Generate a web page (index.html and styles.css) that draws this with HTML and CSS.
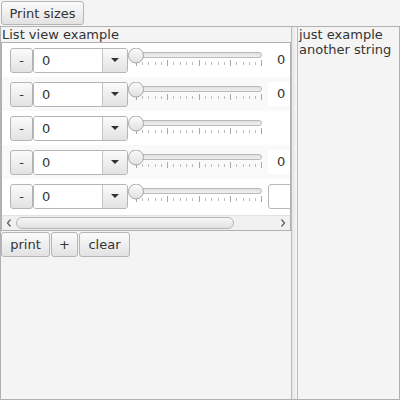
FILE: index.html
```html
<!DOCTYPE html>
<html>
<head>
<meta charset="utf-8">
<link rel="stylesheet" href="styles.css">
</head>
<body>
<svg class="defs" width="0" height="0">
  <defs>
    <linearGradient id="thumbg" x1="0" y1="0" x2="0" y2="1">
      <stop offset="0" stop-color="#fcfcfc"/>
      <stop offset="1" stop-color="#e0e0e0"/>
    </linearGradient>
    <linearGradient id="trackg" x1="0" y1="0" x2="0" y2="1">
      <stop offset="0" stop-color="#dedede"/>
      <stop offset="1" stop-color="#f2f2f2"/>
    </linearGradient>
  </defs>
</svg>
<div class="toolbar"><button class="btn top-btn">Print sizes</button></div>
<div class="split">
  <div class="left">
    <div class="title">List view example</div>
    <div class="list">
      <div class="rows">
        <div class="row">
          <button class="btn minus">-</button>
          <div class="combo"><span class="combo-text">0</span><span class="combo-arrow"><svg width="8" height="4"><path d="M0 0h8l-4 4z" fill="#333"/></svg></span></div>
          <svg class="slider" width="140" height="25"><rect x="7.5" y="4.5" width="126" height="5" rx="2.5" fill="url(#trackg)" stroke="#b9b9b9"/><path d="M8.5 12v6M39.5 12v6M71.5 12v6M102.5 12v6M133.5 12v6" stroke="#a8a8a8"/><path d="M14.5 14v3M20.5 14v3M27.5 14v3M33.5 14v3M45.5 14v3M52.5 14v3M58.5 14v3M64.5 14v3M77.5 14v3M83.5 14v3M90.5 14v3M96.5 14v3M108.5 14v3M115.5 14v3M121.5 14v3M127.5 14v3" stroke="#bdbdbd"/><circle cx="8" cy="7.5" r="7.5" fill="url(#thumbg)" stroke="#a6a6a6"/></svg>
          <span class="value">0</span>
        </div>
        <div class="row alt">
          <button class="btn minus">-</button>
          <div class="combo"><span class="combo-text">0</span><span class="combo-arrow"><svg width="8" height="4"><path d="M0 0h8l-4 4z" fill="#333"/></svg></span></div>
          <svg class="slider" width="140" height="25"><rect x="7.5" y="4.5" width="126" height="5" rx="2.5" fill="url(#trackg)" stroke="#b9b9b9"/><path d="M8.5 12v6M39.5 12v6M71.5 12v6M102.5 12v6M133.5 12v6" stroke="#a8a8a8"/><path d="M14.5 14v3M20.5 14v3M27.5 14v3M33.5 14v3M45.5 14v3M52.5 14v3M58.5 14v3M64.5 14v3M77.5 14v3M83.5 14v3M90.5 14v3M96.5 14v3M108.5 14v3M115.5 14v3M121.5 14v3M127.5 14v3" stroke="#bdbdbd"/><circle cx="8" cy="7.5" r="7.5" fill="url(#thumbg)" stroke="#a6a6a6"/></svg>
          <span class="value">0</span>
        </div>
        <div class="row">
          <button class="btn minus">-</button>
          <div class="combo"><span class="combo-text">0</span><span class="combo-arrow"><svg width="8" height="4"><path d="M0 0h8l-4 4z" fill="#333"/></svg></span></div>
          <svg class="slider" width="140" height="25"><rect x="7.5" y="4.5" width="126" height="5" rx="2.5" fill="url(#trackg)" stroke="#b9b9b9"/><path d="M8.5 12v6M39.5 12v6M71.5 12v6M102.5 12v6M133.5 12v6" stroke="#a8a8a8"/><path d="M14.5 14v3M20.5 14v3M27.5 14v3M33.5 14v3M45.5 14v3M52.5 14v3M58.5 14v3M64.5 14v3M77.5 14v3M83.5 14v3M90.5 14v3M96.5 14v3M108.5 14v3M115.5 14v3M121.5 14v3M127.5 14v3" stroke="#bdbdbd"/><circle cx="8" cy="7.5" r="7.5" fill="url(#thumbg)" stroke="#a6a6a6"/></svg>
          <span class="value"></span>
        </div>
        <div class="row alt">
          <button class="btn minus">-</button>
          <div class="combo"><span class="combo-text">0</span><span class="combo-arrow"><svg width="8" height="4"><path d="M0 0h8l-4 4z" fill="#333"/></svg></span></div>
          <svg class="slider" width="140" height="25"><rect x="7.5" y="4.5" width="126" height="5" rx="2.5" fill="url(#trackg)" stroke="#b9b9b9"/><path d="M8.5 12v6M39.5 12v6M71.5 12v6M102.5 12v6M133.5 12v6" stroke="#a8a8a8"/><path d="M14.5 14v3M20.5 14v3M27.5 14v3M33.5 14v3M45.5 14v3M52.5 14v3M58.5 14v3M64.5 14v3M77.5 14v3M83.5 14v3M90.5 14v3M96.5 14v3M108.5 14v3M115.5 14v3M121.5 14v3M127.5 14v3" stroke="#bdbdbd"/><circle cx="8" cy="7.5" r="7.5" fill="url(#thumbg)" stroke="#a6a6a6"/></svg>
          <span class="value">0</span>
        </div>
        <div class="row">
          <button class="btn minus">-</button>
          <div class="combo"><span class="combo-text">0</span><span class="combo-arrow"><svg width="8" height="4"><path d="M0 0h8l-4 4z" fill="#333"/></svg></span></div>
          <svg class="slider" width="140" height="25"><rect x="7.5" y="4.5" width="126" height="5" rx="2.5" fill="url(#trackg)" stroke="#b9b9b9"/><path d="M8.5 12v6M39.5 12v6M71.5 12v6M102.5 12v6M133.5 12v6" stroke="#a8a8a8"/><path d="M14.5 14v3M20.5 14v3M27.5 14v3M33.5 14v3M45.5 14v3M52.5 14v3M58.5 14v3M64.5 14v3M77.5 14v3M83.5 14v3M90.5 14v3M96.5 14v3M108.5 14v3M115.5 14v3M121.5 14v3M127.5 14v3" stroke="#bdbdbd"/><circle cx="8" cy="7.5" r="7.5" fill="url(#thumbg)" stroke="#a6a6a6"/></svg>
          <span class="field"></span>
        </div>
      </div>
      <div class="hscroll">
        <span class="sarrow"><svg width="6" height="8"><path d="M4.5 0.5L1.5 4L4.5 7.5" fill="none" stroke="#5a5a5a" stroke-width="1.2"/></svg></span>
        <span class="sthumb"></span>
        <span class="sfill"></span>
        <span class="sarrow"><svg width="6" height="8"><path d="M1.5 0.5L4.5 4L1.5 7.5" fill="none" stroke="#5a5a5a" stroke-width="1.2"/></svg></span>
      </div>
    </div>
    <div class="actions">
      <button class="btn b-print">print</button>
      <button class="btn b-plus">+</button>
      <button class="btn b-clear">clear</button>
    </div>
  </div>
  <div class="divider"></div>
  <div class="right">
    <div class="line">just example</div>
    <div class="line">another string</div>
  </div>
</div>
</body>
</html>
```
FILE: styles.css
```css
html, body {
  margin: 0;
  padding: 0;
}
body {
  width: 400px;
  height: 400px;
  overflow: hidden;
  background: #f4f4f4;
  font-family: "DejaVu Sans", sans-serif;
  font-size: 13px;
  color: #333;
}
.defs {
  position: absolute;
}
.toolbar {
  height: 26px;
  box-sizing: border-box;
  padding: 1px 0 0 1px;
}
.btn {
  font: inherit;
  color: #333;
  margin: 0;
  padding: 0;
  box-sizing: border-box;
  border: 1px solid #b5b5b5;
  border-radius: 3px;
  background: linear-gradient(to bottom, #fbfbfb, #e2e2e2);
  height: 25px;
  text-align: center;
  white-space: nowrap;
  flex: none;
}
.top-btn {
  width: 83px;
  height: 24px;
}
.split {
  display: flex;
  height: 374px;
  box-sizing: border-box;
  border: 1px solid #b1b1b1;
}
.left {
  width: 290px;
  flex: none;
  display: flex;
  flex-direction: column;
}
.title {
  height: 15px;
  line-height: 15px;
  padding-left: 1px;
  white-space: nowrap;
}
.list {
  border: 1px solid #b0b0b0;
  background: #fff;
  display: flex;
  flex-direction: column;
}
.rows {
  height: 172px;
  overflow: hidden;
}
.row {
  height: 34px;
  box-sizing: border-box;
  padding-left: 8px;
  display: flex;
  align-items: center;
  background: #fff;
  white-space: nowrap;
}
.row.alt {
  background: #f9f9f9;
}
.minus {
  width: 23px;
}
.combo {
  width: 95px;
  height: 25px;
  flex: none;
  box-sizing: border-box;
  border: 1px solid #b5b5b5;
  border-radius: 3px;
  overflow: hidden;
  display: flex;
}
.combo-text {
  flex: 1;
  background: #fff;
  padding-left: 8px;
  line-height: 23px;
}
.combo-arrow {
  width: 24px;
  border-left: 1px solid #c4c4c4;
  background: linear-gradient(to bottom, #fbfbfb, #e2e2e2);
  display: flex;
  align-items: center;
  justify-content: center;
}
.combo-arrow svg {
  display: block;
}
.slider {
  flex: none;
  display: block;
}
.value {
  flex: none;
  width: 40px;
  height: 24px;
  line-height: 24px;
  padding-left: 9px;
  box-sizing: border-box;
  background: #fff;
}
.field {
  flex: none;
  width: 40px;
  height: 25px;
  box-sizing: border-box;
  border: 1px solid #b8b8b8;
  border-radius: 3px;
  background: #fff;
}
.hscroll {
  height: 15px;
  display: flex;
  align-items: center;
  background: #f0f0f0;
  border-top: 1px solid #e2e2e2;
  box-sizing: border-box;
}
.sarrow {
  width: 14px;
  height: 14px;
  flex: none;
  display: flex;
  align-items: center;
  justify-content: center;
}
.sarrow svg {
  display: block;
}
.sthumb {
  width: 218px;
  height: 12px;
  flex: none;
  box-sizing: border-box;
  border: 1px solid #b6b6b6;
  border-radius: 6px;
  background: linear-gradient(to bottom, #f6f6f6, #e2e2e2);
}
.sfill {
  flex: 1;
}
.actions {
  display: flex;
  gap: 1px;
  padding-top: 1px;
}
.b-print {
  width: 49px;
}
.b-plus {
  width: 27px;
}
.b-clear {
  width: 51px;
}
.divider {
  width: 7px;
  flex: none;
  box-sizing: border-box;
  border-left: 1px solid #bcbcbc;
  border-right: 1px solid #bcbcbc;
  background: linear-gradient(to right, #e6e6e6, #f6f6f6);
}
.right {
  flex: 1;
  padding-left: 1px;
  white-space: nowrap;
  overflow: hidden;
}
.line {
  height: 15px;
  line-height: 15px;
}
```
